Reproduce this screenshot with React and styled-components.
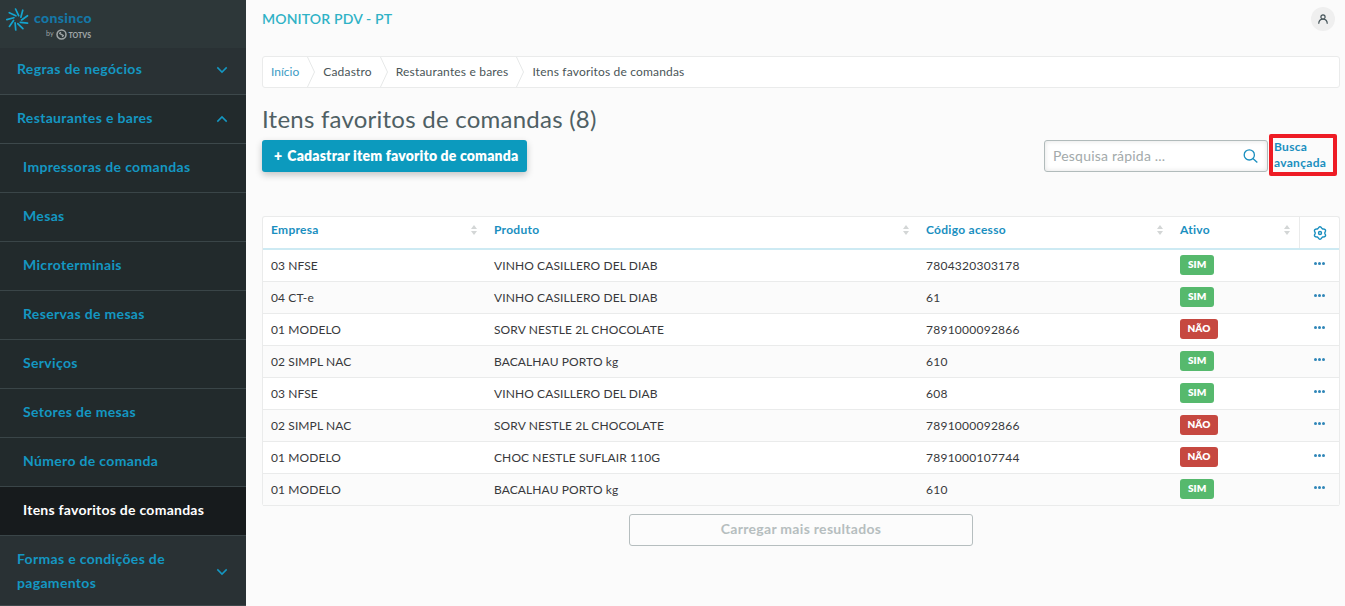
import React from "react";
import styled, { createGlobalStyle, css } from "styled-components";

const SUBMENU = [
    'Impressoras de comandas',
    'Mesas',
    'Microterminais',
    'Reservas de mesas',
    'Serviços',
    'Setores de mesas',
    'Número de comanda',
    'Itens favoritos de comandas',
];

const COLUMNS = ['Empresa', 'Produto', 'Código acesso', 'Ativo'];

const ROWS = [
    { empresa: '03 NFSE', produto: 'VINHO CASILLERO DEL DIAB', codigo: '7804320303178', ativo: true },
    { empresa: '04 CT-e', produto: 'VINHO CASILLERO DEL DIAB', codigo: '61', ativo: true },
    { empresa: '01 MODELO', produto: 'SORV NESTLE 2L CHOCOLATE', codigo: '7891000092866', ativo: false },
    { empresa: '02 SIMPL NAC', produto: 'BACALHAU PORTO kg', codigo: '610', ativo: true },
    { empresa: '03 NFSE', produto: 'VINHO CASILLERO DEL DIAB', codigo: '608', ativo: true },
    { empresa: '02 SIMPL NAC', produto: 'SORV NESTLE 2L CHOCOLATE', codigo: '7891000092866', ativo: false },
    { empresa: '01 MODELO', produto: 'CHOC NESTLE SUFLAIR 110G', codigo: '7891000107744', ativo: false },
    { empresa: '01 MODELO', produto: 'BACALHAU PORTO kg', codigo: '610', ativo: true },
];

// six rounded teeth around the centre
const GEAR_POINTS = Array.from({ length: 72 }, (_, i) => {
    const angle = (i * Math.PI) / 36;
    const radius = 5.5 - 0.7 * Math.cos(6 * angle);
    return `${(7 + radius * Math.cos(angle)).toFixed(2)},${(7 + radius * Math.sin(angle)).toFixed(2)}`;
}).join(' ');

const Chevron = ({ up }) => (
    <svg width="12" height="8" viewBox="0 0 12 8" fill="none" stroke="#1497c2" strokeWidth="1.5">
        <path d={up ? "M1.3 6.6 6 1.9l4.7 4.7" : "M1.3 1.4 6 6.1l4.7-4.7"} />
    </svg>
);

const SortIcon = () => (
    <svg width="6" height="10" viewBox="0 0 6 10" fill="#d3d6d6">
        <path d="M3 0 6 4H0zM3 10 0 6h6z" />
    </svg>
);

const GearIcon = () => (
    <svg width="14" height="14" viewBox="0 0 14 14" fill="none" stroke="#1a8fbf" strokeWidth="1.4">
        <polygon points={GEAR_POINTS} />
        <circle cx="7" cy="7" r="1.5" />
    </svg>
);

const SearchIcon = () => (
    <svg width="15" height="14" viewBox="0 0 15 14" fill="none" stroke="#1a8fbf" strokeWidth="1.3">
        <circle cx="6.3" cy="5.9" r="5.1" />
        <path d="M9.9 9.5 14.3 13.5" />
    </svg>
);

const UserIcon = () => (
    <svg width="10" height="10" viewBox="0 0 10 10" fill="none" stroke="#46555a" strokeWidth="1.2">
        <circle cx="5" cy="2.9" r="2.1" />
        <path d="M.7 9.7C.9 6.6 2.6 5.2 5 5.2s4.1 1.4 4.3 4.5" />
    </svg>
);

const BurstIcon = () => (
    <svg width="23" height="23" viewBox="-11.5 -11.5 23 23" stroke="#14a4cf" strokeWidth="1.7" strokeLinecap="round">
        {[0, 40, 80, 120, 160, 200, 240, 280, 320].map((angle) => (
            <path key={angle} d="M1.4-3.8-1.2-10.6" transform={`rotate(${angle - 4})`} />
        ))}
    </svg>
);

const TotvsIcon = () => (
    <svg width="11" height="11" viewBox="0 0 11 11" fill="none" stroke="#9fa5a6" strokeWidth="1.5">
        <circle cx="5.5" cy="5.5" r="4.5" />
        <path d="M3.2 4.2 7.8 6.8M5 3.4 3.6 4.4M7.4 6.6 6 7.6" strokeWidth="1.4" />
    </svg>
);

const App = () => {
    return (
        <Page>
            <GlobalStyle />
            <Sidebar>
                <Brand>
                    <BurstIcon />
                    <BrandText>
                        <BrandName>consinco</BrandName>
                        <BrandOwner><small>by</small><TotvsIcon />TOTVS</BrandOwner>
                    </BrandText>
                </Brand>
                <MenuItem $first>Regras de negócios<Chevron /></MenuItem>
                <MenuItem $open><span>Restaurantes e bares</span><Chevron up /></MenuItem>
                {SUBMENU.map((label, index) => (
                    <SubItem key={label} $active={index === SUBMENU.length - 1}>{label}</SubItem>
                ))}
                <MenuItem $tall><span>Formas e condições de pagamentos</span><Chevron /></MenuItem>
            </Sidebar>
            <Main>
                <TopBar>
                    <AppName>MONITOR PDV - PT</AppName>
                    <Avatar><UserIcon /></Avatar>
                </TopBar>
                <Breadcrumb>
                    <Crumb $link>Início</Crumb>
                    <CrumbArrow />
                    <Crumb>Cadastro</Crumb>
                    <CrumbArrow />
                    <Crumb>Restaurantes e bares</Crumb>
                    <CrumbArrow />
                    <Crumb>Itens favoritos de comandas</Crumb>
                </Breadcrumb>
                <Title>Itens favoritos de comandas (8)</Title>
                <Actions>
                    <PrimaryButton><span>+</span>Cadastrar item favorito de comanda</PrimaryButton>
                    <SearchArea>
                        <SearchBox>
                            <input placeholder="Pesquisa rápida ..." />
                            <SearchIcon />
                        </SearchBox>
                        <AdvancedLink>Busca avançada</AdvancedLink>
                    </SearchArea>
                </Actions>
                <Table>
                    <HeadRow>
                        {COLUMNS.map((label) => (
                            <HeadCell key={label}><span>{label}</span><SortIcon /></HeadCell>
                        ))}
                        <GearCell><GearIcon /></GearCell>
                    </HeadRow>
                    {ROWS.map((row, index) => (
                        <Row key={index}>
                            <Cell>{row.empresa}</Cell>
                            <Cell>{row.produto}</Cell>
                            <Cell $code>{row.codigo}</Cell>
                            <Cell><Badge $on={row.ativo}>{row.ativo ? 'SIM' : 'NÃO'}</Badge></Cell>
                            <Dots><i /><i /><i /></Dots>
                        </Row>
                    ))}
                </Table>
                <MoreButton>Carregar mais resultados</MoreButton>
            </Main>
        </Page>
    );
};

const CrumbArrow = () => (
    <svg width="8" height="30" viewBox="0 0 8 30" fill="none" stroke="#e6e8e8">
        <path d="M.5 0 7.5 15 .5 30" />
    </svg>
);

const GlobalStyle = createGlobalStyle`
    * {
        box-sizing: border-box;
    }
    body {
        margin: 0;
        overflow: hidden;
        background: #fbfbfb;
        font-family: Lato, "Open Sans", sans-serif;
        font-variant-ligatures: none;
    }
    button, input {
        font-family: inherit;
    }
`;

const Page = styled.div`
    display: flex;
    height: 606px;
`;

const Sidebar = styled.nav`
    width: 246px;
    flex-shrink: 0;
    height: 606px;
    overflow: hidden;
    background: #293134;
`;

const Brand = styled.div`
    display: flex;
    height: 48px;
    padding: 8px 0 0 6px;
    background: #2d3739;
`;

const BrandText = styled.div`
    display: flex;
    flex-direction: column;
    width: 57px;
    margin: 2px 0 0 5px;
`;

const BrandName = styled.div`
    height: 18px;
    line-height: 16px;
    font-size: 14px;
    font-weight: 900;
    letter-spacing: 0.35px;
    color: #1478a8;
`;

const BrandOwner = styled.div`
    display: flex;
    align-items: center;
    justify-content: flex-end;
    height: 13px;
    gap: 2px;
    font-size: 7px;
    font-weight: 900;
    color: #9fa5a6;
    small {
        font-size: 7px;
        font-weight: 400;
        margin-top: -4px;
    }
`;

const itemText = css`
    font-size: 14px;
    font-weight: 700;
    line-height: 24px;
    letter-spacing: 0.33px;
    color: #1497c2;
`;

const MenuItem = styled.div`
    display: flex;
    align-items: center;
    justify-content: space-between;
    height: ${({ $first, $tall }) => ($first ? 47 : $tall ? 70 : 49)}px;
    padding: ${({ $tall }) => ($tall ? 3 : 0)}px 18px ${({ $first }) => ($first ? 4 : 0)}px 17px;
    border-bottom: 1px solid #3d484b;
    background: ${({ $open }) => ($open ? '#222a2c' : '#293134')};
    ${itemText}
    span {
        width: 170px;
        padding-bottom: 2px;
    }
    svg {
        position: relative;
        top: ${({ $first }) => ($first ? 1 : 0)}px;
    }
`;

const SubItem = styled.div`
    height: 49px;
    padding: 11px 0 0 23px;
    border-bottom: 1px solid #3a4548;
    background: ${({ $active }) => ($active ? '#171b1d' : '#222a2c')};
    ${itemText}
    ${({ $active }) => $active && 'color: #fff; letter-spacing: 0.26px;'}
`;

const Main = styled.main`
    display: flex;
    flex-direction: column;
    flex: 1;
    padding: 0 5px 0 16px;
`;

const TopBar = styled.header`
    display: flex;
    justify-content: space-between;
    height: 56px;
    padding: 7px 5px 0 0;
`;

const AppName = styled.div`
    font-size: 14px;
    font-weight: 600;
    line-height: 24px;
    letter-spacing: 0.15px;
    color: #2fb2c6;
`;

const Avatar = styled.div`
    display: flex;
    align-items: center;
    justify-content: center;
    width: 24px;
    height: 24px;
    border-radius: 50%;
    background: #efefef;
`;

const Breadcrumb = styled.div`
    display: flex;
    align-items: center;
    gap: 8px;
    height: 32px;
    padding-left: 8px;
    border: 1px solid #eaebeb;
    border-radius: 3px;
    background: #fff;
`;

const Crumb = styled.span`
    padding-bottom: 2px;
    font-size: 12px;
    letter-spacing: ${({ $link }) => ($link ? 0 : 0.18)}px;
    color: ${({ $link }) => ($link ? '#3c9cc4' : '#4a5558')};
`;

const Title = styled.h1`
    height: 52px;
    margin: 0;
    padding-top: 15px;
    font-size: 24px;
    font-weight: 400;
    line-height: 32px;
    letter-spacing: 0.24px;
    color: #4f6064;
`;

const Actions = styled.div`
    display: flex;
    justify-content: space-between;
    height: 76px;
`;

const PrimaryButton = styled.button`
    display: flex;
    align-items: center;
    gap: 5px;
    width: 265px;
    height: 32px;
    padding: 0 0 2px 12px;
    border: 0;
    border-radius: 3px;
    background: #0c9abe;
    box-shadow: 0 3px 7px rgb(0 0 0 / 22%);
    font-size: 14px;
    font-weight: 800;
    letter-spacing: 0.17px;
    color: #fff;
    white-space: nowrap;
`;

const SearchArea = styled.div`
    display: flex;
    gap: 1px;
    padding-right: 3px;
`;

const SearchBox = styled.label`
    display: flex;
    align-items: center;
    justify-content: space-between;
    width: 224px;
    height: 32px;
    padding: 0 9px 0 8px;
    border: 1px solid #b1bbbb;
    border-radius: 3px;
    background: #fff;
    box-shadow: inset 0 0 5px rgb(0 0 0 / 12%);
    input {
        width: 180px;
        padding: 0 0 2px;
        border: 0;
        outline: 0;
        background: none;
        font-size: 14px;
        letter-spacing: 0.2px;
    }
    input::placeholder {
        color: #a3aaab;
    }
`;

const AdvancedLink = styled.a`
    width: 68px;
    height: 42px;
    margin-top: -6px;
    padding: 1px 0 0 1px;
    border: 4px solid #ee1c25;
    border-radius: 2px;
    font-size: 12px;
    font-weight: 700;
    line-height: 16px;
    letter-spacing: 0.3px;
    color: #1a8fbf;
`;

const Table = styled.div`
    height: 290px;
    border: 1px solid #eaebeb;
    border-bottom: 0;
    border-radius: 3px;
    background: #fff;
`;

const rowGrid = css`
    display: grid;
    grid-template-columns: 223px 432px 254px 127px 1fr;
`;

const HeadRow = styled.div`
    ${rowGrid}
    height: 33px;
    border-bottom: 2px solid #cdeaf3;
`;

const HeadCell = styled.div`
    display: flex;
    align-items: center;
    justify-content: space-between;
    padding: 0 9px 5px 8px;
    font-size: 12px;
    font-weight: 700;
    letter-spacing: 0.28px;
    color: #1a8fbf;
    span {
        padding-bottom: 1px;
    }
`;

const GearCell = styled.div`
    display: flex;
    align-items: center;
    justify-content: center;
    border-left: 1px solid #eaebeb;
`;

const Row = styled.div`
    ${rowGrid}
    height: 32px;
    border-bottom: 1px solid #eaebeb;
    &:nth-child(odd) {
        background: #fbfbfb;
    }
`;

const Cell = styled.div`
    display: flex;
    align-items: center;
    padding-left: 8px;
    font-size: 12px;
    letter-spacing: ${({ $code }) => ($code ? 0.25 : 0.1)}px;
    color: #38393c;
`;

const Badge = styled.span`
    height: 20px;
    margin-bottom: 2px;
    padding: 0 ${({ $on }) => ($on ? 8 : 7.5)}px;
    border-radius: 3px;
    background: ${({ $on }) => ($on ? '#56b96d' : '#c64840')};
    font-size: 10px;
    font-weight: 800;
    line-height: 19px;
    letter-spacing: 0;
    color: #fff;
`;

const Dots = styled.div`
    display: flex;
    justify-content: center;
    gap: 1px;
    padding-top: 12px;
    i {
        width: 3px;
        height: 3px;
        border-radius: 50%;
        background: #2f86b8;
    }
`;

const MoreButton = styled.button`
    align-self: center;
    width: 344px;
    height: 32px;
    margin-top: 8px;
    padding: 0 0 3px;
    border: 1px solid #b6bebf;
    border-radius: 3px;
    background: #fcfcfc;
    font-size: 14px;
    font-weight: 700;
    letter-spacing: 0.3px;
    color: #b6bebf;
`;

export default App;
